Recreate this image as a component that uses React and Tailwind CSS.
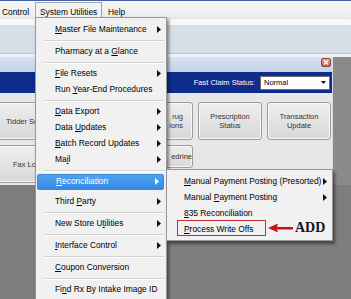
import React from "react";

const mainItems = [
  { t: "Master File Maintenance", u: 0, arrow: true },
  "sep",
  { t: "Pharmacy at a Glance", u: 14 },
  "sep",
  { t: "File Resets", u: 0, arrow: true },
  { t: "Run Year-End Procedures", u: 4 },
  "sep",
  { t: "Data Export", u: 0, arrow: true },
  { t: "Data Updates", u: 5, arrow: true },
  { t: "Batch Record Updates", u: 0, arrow: true },
  { t: "Mail", u: 2, arrow: true },
  "sep",
  { t: "Reconciliation", u: 0, arrow: true, active: true },
  "gap",
  { t: "Third Party", u: 6, arrow: true },
  "sep",
  { t: "New Store Utilities", u: 11, arrow: true },
  "sep",
  { t: "Interface Control", u: 0, arrow: true },
  "sep",
  { t: "Coupon Conversion", u: 0 },
  "sep",
  { t: "Find Rx By Intake Image ID", u: 2 },
];

const subItems = [
  { t: "Manual Payment Posting (Presorted)", u: 0, arrow: true },
  { t: "Manual Payment Posting", u: 7, arrow: true },
  { t: "835 Reconciliation", u: 0 },
  { t: "Process Write Offs", u: 0, boxed: true },
];

function Arrow({ white }) {
  return (
    <svg width="4" height="7" viewBox="0 0 4 7" className="shrink-0">
      <path d="M0 0 L4 3.5 L0 7 Z" fill={white ? "#ffffff" : "#111111"} />
    </svg>
  );
}

function Label({ text, u }) {
  return (
    <span className="whitespace-nowrap">
      {text.slice(0, u)}
      <span className="underline decoration-[1px] underline-offset-[1px]">{text[u]}</span>
      {text.slice(u + 1)}
    </span>
  );
}

function Sep() {
  return (
    <div className="flex h-[6px] flex-col justify-center pl-[7px] pr-[1px]">
      <div className="h-px bg-[#d4d4d4]" />
      <div className="h-px bg-white" />
    </div>
  );
}

const Btn = ({ children, className = "" }) => (
  <div
    className={`flex flex-col items-center justify-center overflow-hidden rounded-[3px] border border-[#9c9c9c] bg-gradient-to-b from-[#eeeeee] to-[#d8d8d8] text-center text-[7.5px] leading-[9px] whitespace-nowrap text-[#333] shadow-[inset_0_0_0_1px_#f7f7f7] ${className}`}
  >
    {children}
  </div>
);

// only the part of a label that shows beside the open menu
const Peek = ({ children, className = "" }) => (
  <div className={`flex flex-col items-end overflow-hidden ${className}`}>{children}</div>
);

export default function App() {
  return (
    <div className="relative h-[299px] w-[351px] overflow-hidden bg-[#7e7e7e] font-['Liberation_Sans',Arial,sans-serif] text-[8.4px] text-black">
      {/* menu bar */}
      <div className="h-[1px] bg-[#3d63a6]" />
      <div className="flex h-[17px] items-start bg-gradient-to-b from-[#f7f7f7] to-[#ececec] pt-[1px]">
        <div className="w-[35px] pl-[2px] pt-[4px]">Control</div>
        <div className="h-[16px] w-[67px] border border-b-0 border-[#a5a5a5] bg-[#f3f3f3] pl-[4px] pt-[3px]">
          System Utilities
        </div>
        <div className="pl-[6px] pt-[4px]">Help</div>
      </div>
      <div className="h-[7px] border-t border-[#e4e4e4] bg-[#f6f7f8]" />
      <div className="h-[28px] bg-[#d6dee8]" />
      <div className="h-[4px] border-t border-[#b9c3d0] bg-[#eef2f7]" />

      {/* document window */}
      <div className="flex">
        <div className="w-[333px] border-r border-[#d9dee6]">
          <div className="flex h-[15px] items-start justify-end bg-gradient-to-b from-[#d6e2f1] to-[#c3d3e8] pr-[1px] pt-[1px]">
            <div className="flex h-[9px] w-[10px] items-center justify-center rounded-[2px] border border-[#8e4636] bg-gradient-to-b from-[#e7aa9a] to-[#c25c47]">
              <svg width="6" height="5" viewBox="0 0 6 5">
                <path d="M1 0.5 L5 4.5 M5 0.5 L1 4.5" stroke="#fff" strokeWidth="1.2" />
              </svg>
            </div>
          </div>
          <div className="flex h-[21px] items-center justify-end bg-[#0d2c8c] pr-[2px]">
            <span className="mr-[5px] text-[7.5px] text-white">Fast Claim Status:</span>
            <div className="flex h-[14px] w-[70px] items-center justify-between border border-[#6d6d6d] bg-white pl-[3px] pr-[3px] text-[7.5px]">
              <span>Normal</span>
              <svg width="5" height="3" viewBox="0 0 5 3">
                <path d="M0 0 L5 0 L2.5 3 Z" fill="#111" />
              </svg>
            </div>
          </div>
          <div className="h-[92px] bg-[#e7e7e7] pt-[9px]">
            <div className="ml-[-10px] grid grid-cols-[65px_64px_64px_64px_64px] grid-rows-[38px_38px] gap-[5px]">
              <Btn className="items-start pl-[15px]">Tidder Se</Btn>
              <Btn />
              <Btn className="items-start">
                <Peek className="ml-[37px] w-[16px]">
                  <span>rug</span>
                  <span>ions</span>
                </Peek>
              </Btn>
              <Btn>
                <span>Prescription</span>
                <span>Status</span>
              </Btn>
              <Btn>
                <span>Transaction</span>
                <span>Update</span>
              </Btn>
              <Btn className="items-start pl-[22px]">Fax Lo</Btn>
              <div />
              <Btn className="h-[23px] items-start self-start">
                <Peek className="ml-[37px] w-[25px]">
                  <span>edrine</span>
                </Peek>
              </Btn>
            </div>
          </div>
        </div>
        <div className="flex-1 bg-[#8a8a8a]" />
      </div>

      {/* System Utilities drop-down */}
      <div className="absolute left-[35px] top-[17px] h-[284px] w-[132px] border border-[#979797] bg-[#f1f1f1] pt-[3.5px] shadow-[2px_2px_3px_rgba(0,0,0,0.45)]">
        {mainItems.map((it, i) => {
          if (it === "sep") return <Sep key={i} />;
          if (it === "gap") return <div key={i} className="h-[4px]" />;
          return (
            <div
              key={i}
              className={`flex h-[16px] items-center justify-between ${
                it.active
                  ? "ml-[1px] mr-[2px] rounded-[2px] border border-[#3f86d9] bg-gradient-to-b from-[#4ea2f0] to-[#3389e6] pl-[18px] pr-[4px] text-white"
                  : "pl-[19px] pr-[5px]"
              }`}
            >
              <Label text={it.t} u={it.u} />
              {it.arrow && <Arrow white={it.active} />}
            </div>
          );
        })}
      </div>

      {/* Reconciliation sub-menu */}
      <div className="absolute left-[166px] top-[169px] w-[167px] border border-[#979797] bg-[#f1f1f1] pb-[3px] pt-[3px] shadow-[2px_3px_3px_rgba(0,0,0,0.45)]">
        {subItems.map((it, i) => (
          <div key={i} className="relative flex h-[16px] items-center justify-between pl-[17px] pr-[5px]">
            <Label text={it.t} u={it.u} />
            {it.arrow && <Arrow />}
            {it.boxed && (
              <div className="absolute left-[10px] top-[-1px] h-[16px] w-[89px] border-[1.5px] border-[#c62a33]" />
            )}
          </div>
        ))}
      </div>

      {/* annotation */}
      <div className="absolute left-[268px] top-[221px] flex items-center">
        <svg width="25" height="12" viewBox="0 0 25 12">
          <path d="M0 6 L10 1.5 L9 5 L25 5 L25 7.5 L9 7.5 L10 10.5 Z" fill="#c8121c" />
        </svg>
        <span className="ml-[2px] font-['Liberation_Serif','Times_New_Roman',serif] text-[14px] font-bold leading-none text-[#14141e]">
          ADD
        </span>
      </div>
    </div>
  );
}
